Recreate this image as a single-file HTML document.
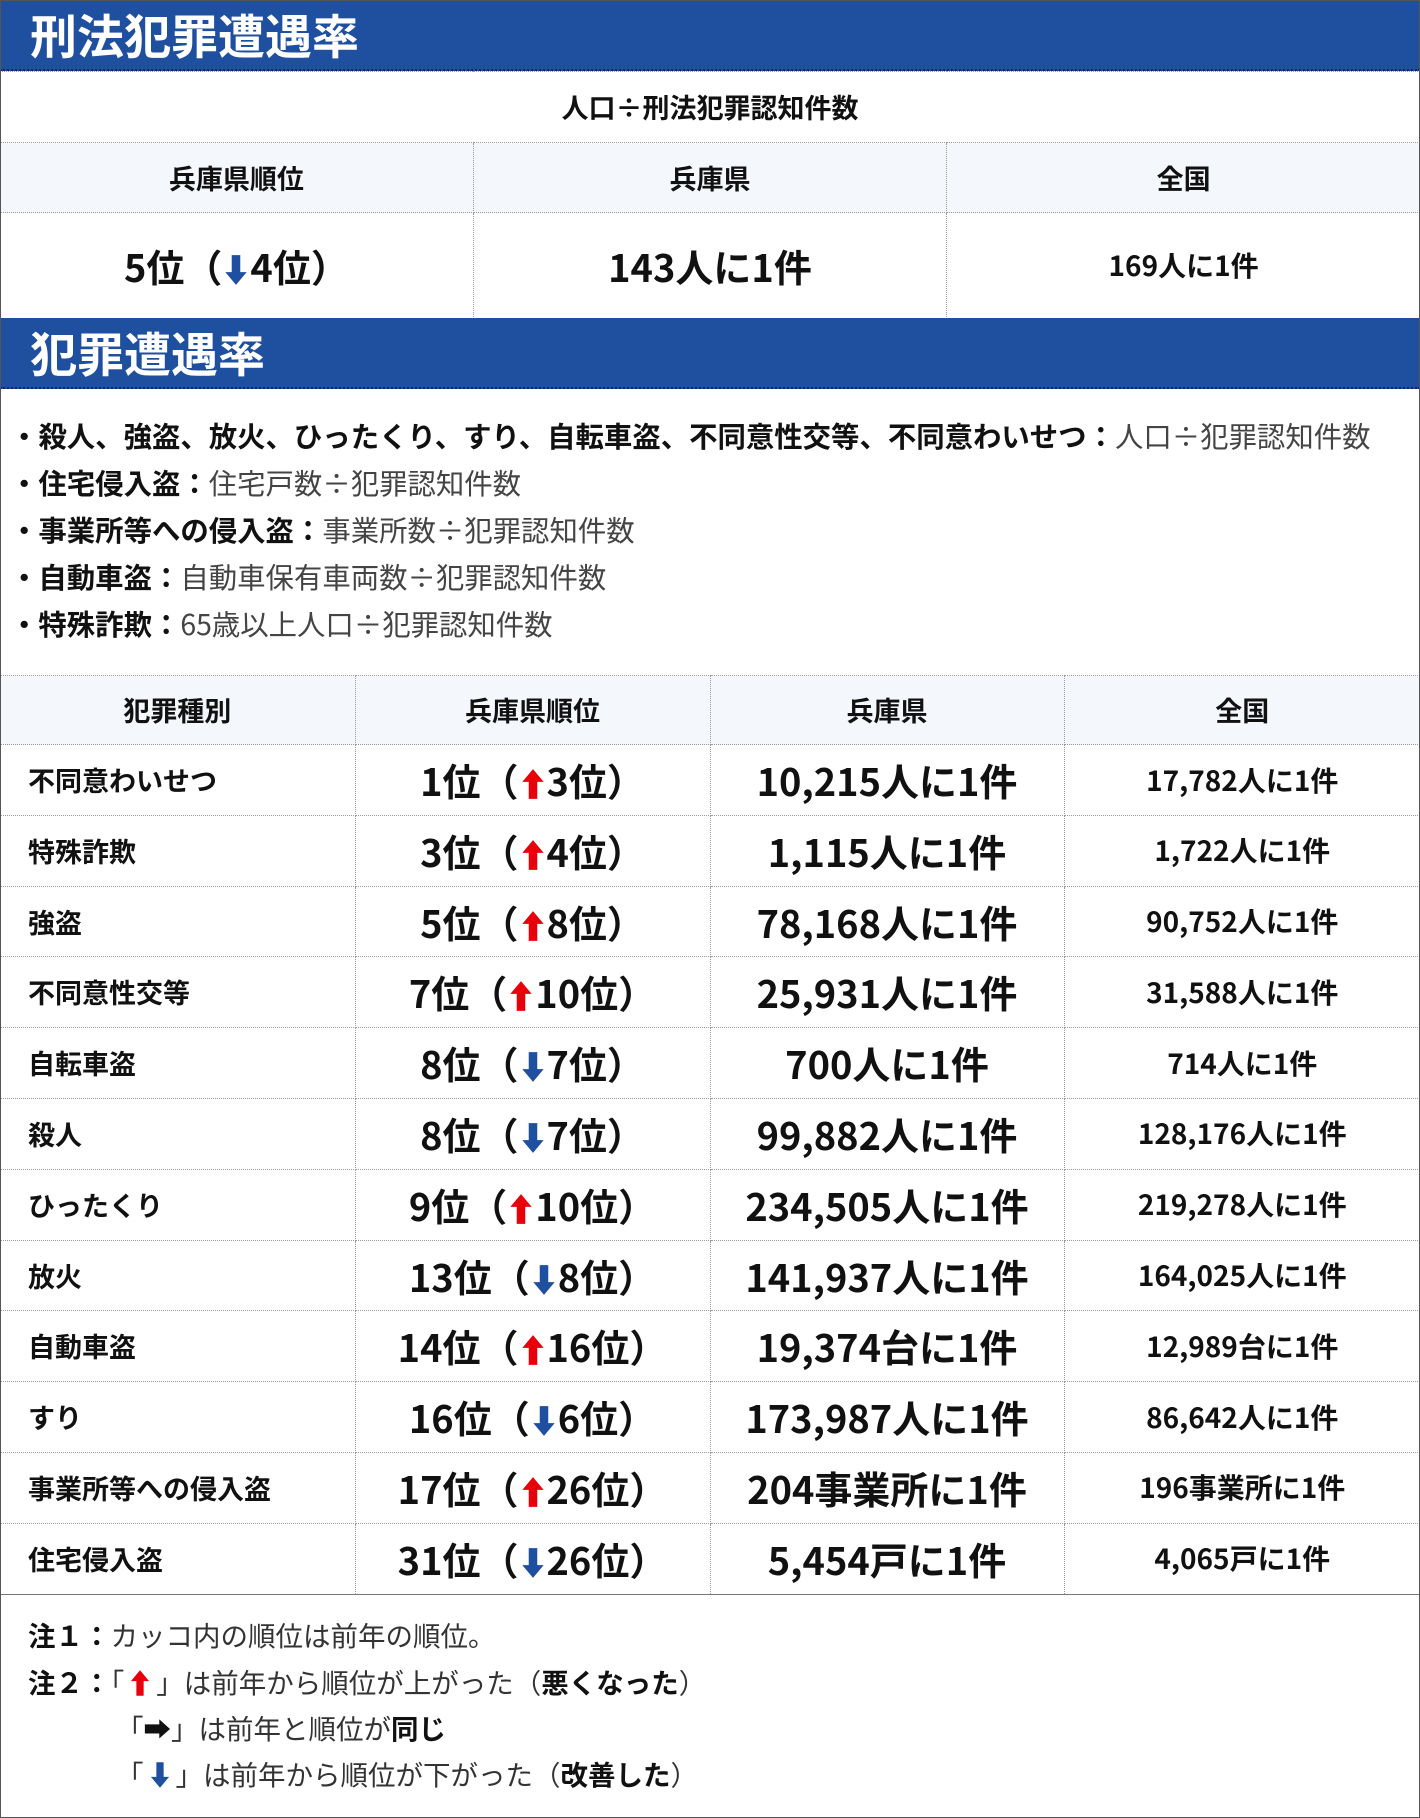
<!DOCTYPE html>
<html><head><meta charset="utf-8"><style>
*{margin:0;padding:0;box-sizing:border-box}
body{width:1420px;height:1818px;background:#fff;font-family:"Noto Sans CJK JP","Liberation Sans",sans-serif;color:#111;position:relative;overflow:hidden}
.frame{position:absolute;left:0;top:0;width:1420px;height:1818px;border:1px solid #555}
.hd{position:absolute;left:0;width:1420px;height:71px;background:#1f4f9f;color:#fff;font-weight:bold;font-size:47px;line-height:68px;padding-left:30px;border-bottom:2px dotted #0d2a5a}
table{position:absolute;left:0;width:1420px;border-collapse:collapse;table-layout:fixed}
td{border:1px dotted #999;text-align:center;font-weight:bold;vertical-align:middle;line-height:1.1}
tr td:first-child{border-left:none}tr td:last-child{border-right:none}
.th td{background:#f4f8fd;font-size:27px}
.big{font-size:38px}.sm{font-size:28px}
.nm{text-align:left;padding-left:28px;font-size:27px}
.up,.dn{display:inline-block;width:24px;height:32px;vertical-align:-4px;margin:0 2px}
.bl{position:absolute;left:10px;font-size:28.4px;line-height:32px}
.bl b{font-weight:bold}.bl span{color:#444;font-weight:normal}
.nt{position:absolute;font-size:27.5px;line-height:32px;color:#333}
.nt b{color:#111}
.nt .up,.nt .dn{width:20px;height:28px;margin:0 6px}
</style></head><body>
<svg width="0" height="0" style="position:absolute"><defs>
<symbol id="u" viewBox="0 0 22 30"><path d="M11 1 L21 13 L15 13 L15 29 L7 29 L7 13 L1 13 Z" fill="#e8000b"/></symbol>
<symbol id="d" viewBox="0 0 22 30"><path d="M11 29 L21 17 L15 17 L15 1 L7 1 L7 17 L1 17 Z" fill="#1f4f9f"/></symbol>
</defs></svg>
<div class="hd" style="top:0">刑法犯罪遭遇率</div>
<table style="top:71px">
<tr><td colspan="3" style="height:71px;font-size:27px">人口÷刑法犯罪認知件数</td></tr>
<tr class="th"><td style="height:70px">兵庫県順位</td><td>兵庫県</td><td>全国</td></tr>
<tr><td class="big" style="height:106px">5位（<svg class="dn"><use href="#d"/></svg>4位）</td><td class="big">143人に1件</td><td class="sm">169人に1件</td></tr>
</table>
<div class="hd" style="top:318px">犯罪遭遇率</div>
<div class="bl" style="top:420px"><b>・殺人、強盗、放火、ひったくり、すり、自転車盗、不同意性交等、不同意わいせつ：</b><span>人口÷犯罪認知件数</span></div>
<div class="bl" style="top:467px"><b>・住宅侵入盗：</b><span>住宅戸数÷犯罪認知件数</span></div>
<div class="bl" style="top:514px"><b>・事業所等への侵入盗：</b><span>事業所数÷犯罪認知件数</span></div>
<div class="bl" style="top:561px"><b>・自動車盗：</b><span>自動車保有車両数÷犯罪認知件数</span></div>
<div class="bl" style="top:608px"><b>・特殊詐欺：</b><span>65歳以上人口÷犯罪認知件数</span></div>
<table style="top:675px">
<colgroup><col style="width:355px"><col style="width:355px"><col style="width:354px"><col style="width:356px"></colgroup>
<tr class="th"><td style="height:69px">犯罪種別</td><td>兵庫県順位</td><td>兵庫県</td><td>全国</td></tr>
<tr style="height:70.8px"><td class="nm">不同意わいせつ</td><td class="big">1位（<svg class="up"><use href="#u"/></svg>3位）</td><td class="big">10,215人に1件</td><td class="sm">17,782人に1件</td></tr>
<tr style="height:70.8px"><td class="nm">特殊詐欺</td><td class="big">3位（<svg class="up"><use href="#u"/></svg>4位）</td><td class="big">1,115人に1件</td><td class="sm">1,722人に1件</td></tr>
<tr style="height:70.8px"><td class="nm">強盗</td><td class="big">5位（<svg class="up"><use href="#u"/></svg>8位）</td><td class="big">78,168人に1件</td><td class="sm">90,752人に1件</td></tr>
<tr style="height:70.8px"><td class="nm">不同意性交等</td><td class="big">7位（<svg class="up"><use href="#u"/></svg>10位）</td><td class="big">25,931人に1件</td><td class="sm">31,588人に1件</td></tr>
<tr style="height:70.8px"><td class="nm">自転車盗</td><td class="big">8位（<svg class="dn"><use href="#d"/></svg>7位）</td><td class="big">700人に1件</td><td class="sm">714人に1件</td></tr>
<tr style="height:70.8px"><td class="nm">殺人</td><td class="big">8位（<svg class="dn"><use href="#d"/></svg>7位）</td><td class="big">99,882人に1件</td><td class="sm">128,176人に1件</td></tr>
<tr style="height:70.8px"><td class="nm">ひったくり</td><td class="big">9位（<svg class="up"><use href="#u"/></svg>10位）</td><td class="big">234,505人に1件</td><td class="sm">219,278人に1件</td></tr>
<tr style="height:70.8px"><td class="nm">放火</td><td class="big">13位（<svg class="dn"><use href="#d"/></svg>8位）</td><td class="big">141,937人に1件</td><td class="sm">164,025人に1件</td></tr>
<tr style="height:70.8px"><td class="nm">自動車盗</td><td class="big">14位（<svg class="up"><use href="#u"/></svg>16位）</td><td class="big">19,374台に1件</td><td class="sm">12,989台に1件</td></tr>
<tr style="height:70.8px"><td class="nm">すり</td><td class="big">16位（<svg class="dn"><use href="#d"/></svg>6位）</td><td class="big">173,987人に1件</td><td class="sm">86,642人に1件</td></tr>
<tr style="height:70.8px"><td class="nm">事業所等への侵入盗</td><td class="big">17位（<svg class="up"><use href="#u"/></svg>26位）</td><td class="big">204事業所に1件</td><td class="sm">196事業所に1件</td></tr>
<tr style="height:70.8px"><td class="nm" style="border-bottom:1px solid #777">住宅侵入盗</td><td class="big" style="border-bottom:1px solid #777">31位（<svg class="dn"><use href="#d"/></svg>26位）</td><td class="big" style="border-bottom:1px solid #777">5,454戸に1件</td><td class="sm" style="border-bottom:1px solid #777">4,065戸に1件</td></tr>
</table>
<div class="nt" style="left:28px;top:1618px"><b>注１：</b>カッコ内の順位は前年の順位。</div>
<div class="nt" style="left:28px;top:1665px"><b>注２：</b>「<svg class="up"><use href="#u"/></svg>」は前年から順位が上がった（<b>悪くなった</b>）</div>
<div class="nt" style="left:116px;top:1711px">「<b>➡</b>」は前年と順位が<b>同じ</b></div>
<div class="nt" style="left:116px;top:1757px">「<svg class="dn"><use href="#d"/></svg>」は前年から順位が下がった（<b>改善した</b>）</div>
<div class="frame"></div>
</body></html>
